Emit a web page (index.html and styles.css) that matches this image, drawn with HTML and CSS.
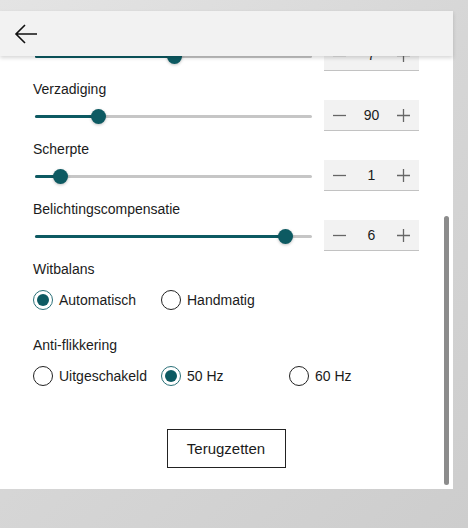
FILE: index.html
```html
<!DOCTYPE html>
<html lang="nl">
<head>
  <meta charset="UTF-8">
  <meta name="viewport" content="width=device-width, initial-scale=1.0">
  <title>Camera-instellingen</title>
  <link rel="stylesheet" href="styles.css">
</head>
<body>

<div class="panel">
  <div class="topbar">
    <button class="back" aria-label="Terug">
      <svg width="24" height="22" viewBox="0 0 24 22">
        <path d="M23 11H2M11 2L2 11l9 9" fill="none" stroke="#111" stroke-width="1.6"/>
      </svg>
    </button>
  </div>

  <div class="main">
  <div class="scroller" id="scroller">
    <div class="content">

      <div class="field">
        <div class="label">Zoom</div>
        <div class="control">
          <div class="slider">
            <div class="track"></div>
            <div class="fill" style="width: 0%"></div>
            <div class="knob" style="left: 0%"></div>
          </div>
          <div class="stepper">
            <span class="step">
              <svg width="13" height="13" viewBox="0 0 13 13"><path d="M0 6.5h13" stroke="#666" stroke-width="1.3"/></svg>
            </span>
            <span class="value">1</span>
            <span class="step">
              <svg width="13" height="13" viewBox="0 0 13 13"><path d="M0 6.5h13M6.5 0v13" stroke="#666" stroke-width="1.3"/></svg>
            </span>
          </div>
        </div>
      </div>

      <div class="field">
        <div class="label">Focus</div>
        <div class="control">
          <div class="slider">
            <div class="track"></div>
            <div class="fill" style="width: 30%"></div>
            <div class="knob" style="left: 30%"></div>
          </div>
          <div class="stepper">
            <span class="step">
              <svg width="13" height="13" viewBox="0 0 13 13"><path d="M0 6.5h13" stroke="#666" stroke-width="1.3"/></svg>
            </span>
            <span class="value">30</span>
            <span class="step">
              <svg width="13" height="13" viewBox="0 0 13 13"><path d="M0 6.5h13M6.5 0v13" stroke="#666" stroke-width="1.3"/></svg>
            </span>
          </div>
        </div>
      </div>

      <div class="field">
        <div class="label">Helderheid</div>
        <div class="control">
          <div class="slider">
            <div class="track"></div>
            <div class="fill" style="width: 50%"></div>
            <div class="knob" style="left: 50%"></div>
          </div>
          <div class="stepper">
            <span class="step">
              <svg width="13" height="13" viewBox="0 0 13 13"><path d="M0 6.5h13" stroke="#666" stroke-width="1.3"/></svg>
            </span>
            <span class="value">0</span>
            <span class="step">
              <svg width="13" height="13" viewBox="0 0 13 13"><path d="M0 6.5h13M6.5 0v13" stroke="#666" stroke-width="1.3"/></svg>
            </span>
          </div>
        </div>
      </div>

      <div class="field">
        <div class="label">Contrast</div>
        <div class="control">
          <div class="slider">
            <div class="track"></div>
            <div class="fill" style="width: 50%"></div>
            <div class="knob" style="left: 50%"></div>
          </div>
          <div class="stepper">
            <span class="step">
              <svg width="13" height="13" viewBox="0 0 13 13"><path d="M0 6.5h13" stroke="#666" stroke-width="1.3"/></svg>
            </span>
            <span class="value">7</span>
            <span class="step">
              <svg width="13" height="13" viewBox="0 0 13 13"><path d="M0 6.5h13M6.5 0v13" stroke="#666" stroke-width="1.3"/></svg>
            </span>
          </div>
        </div>
      </div>

      <div class="field">
        <div class="label">Verzadiging</div>
        <div class="control">
          <div class="slider">
            <div class="track"></div>
            <div class="fill" style="width: 22.7%"></div>
            <div class="knob" style="left: 22.7%"></div>
          </div>
          <div class="stepper">
            <span class="step">
              <svg width="13" height="13" viewBox="0 0 13 13"><path d="M0 6.5h13" stroke="#666" stroke-width="1.3"/></svg>
            </span>
            <span class="value">90</span>
            <span class="step">
              <svg width="13" height="13" viewBox="0 0 13 13"><path d="M0 6.5h13M6.5 0v13" stroke="#666" stroke-width="1.3"/></svg>
            </span>
          </div>
        </div>
      </div>

      <div class="field">
        <div class="label">Scherpte</div>
        <div class="control">
          <div class="slider">
            <div class="track"></div>
            <div class="fill" style="width: 9%"></div>
            <div class="knob" style="left: 9%"></div>
          </div>
          <div class="stepper">
            <span class="step">
              <svg width="13" height="13" viewBox="0 0 13 13"><path d="M0 6.5h13" stroke="#666" stroke-width="1.3"/></svg>
            </span>
            <span class="value">1</span>
            <span class="step">
              <svg width="13" height="13" viewBox="0 0 13 13"><path d="M0 6.5h13M6.5 0v13" stroke="#666" stroke-width="1.3"/></svg>
            </span>
          </div>
        </div>
      </div>

      <div class="field">
        <div class="label">Belichtingscompensatie</div>
        <div class="control">
          <div class="slider">
            <div class="track"></div>
            <div class="fill" style="width: 90.3%"></div>
            <div class="knob" style="left: 90.3%"></div>
          </div>
          <div class="stepper">
            <span class="step">
              <svg width="13" height="13" viewBox="0 0 13 13"><path d="M0 6.5h13" stroke="#666" stroke-width="1.3"/></svg>
            </span>
            <span class="value">6</span>
            <span class="step">
              <svg width="13" height="13" viewBox="0 0 13 13"><path d="M0 6.5h13M6.5 0v13" stroke="#666" stroke-width="1.3"/></svg>
            </span>
          </div>
        </div>
      </div>

      <div class="group">
        <div class="label">Witbalans</div>
        <div class="radios">
          <label class="radio"><span class="dot checked"></span>Automatisch</label>
          <label class="radio"><span class="dot"></span>Handmatig</label>
        </div>
      </div>

      <div class="group">
        <div class="label">Anti-flikkering</div>
        <div class="radios">
          <label class="radio"><span class="dot"></span>Uitgeschakeld</label>
          <label class="radio"><span class="dot checked"></span>50 Hz</label>
          <label class="radio"><span class="dot"></span>60 Hz</label>
        </div>
      </div>

      <div class="actions">
        <button class="reset">Terugzetten</button>
      </div>

    </div>
  </div>
  <div class="scrollbar"><div class="thumb"></div></div>
  </div>
</div>

<script>
  // lijst staat naar beneden gescrold
  var scroller = document.getElementById('scroller');
  scroller.scrollTop = scroller.scrollHeight;
</script>

</body>
</html>
```

FILE: styles.css
```css
body {
  margin: 0;
  height: 528px;
  overflow: hidden;
  font-family: "Liberation Sans", Arial, sans-serif;
  font-size: 14px;
  color: #1b1b1b;
  background: linear-gradient(135deg, #e4e4e4 0%, #d6d6d6 50%, #cdcdcd 100%);
}
.panel {
  margin-top: 11px;
  width: 453px;
  height: 478px;
  background: #fff;
  display: flex;
  flex-direction: column;
}
.topbar {
  height: 45px;
  flex: none;
  background: #f2f2f2;
  box-shadow: 0 2px 4px rgba(0, 0, 0, 0.16);
  position: relative;
  z-index: 1;
  display: flex;
  align-items: center;
  padding-left: 14px;
}
.back {
  border: 0;
  background: none;
  padding: 0;
  display: flex;
}
.main {
  flex: 1;
  min-height: 0;
  display: flex;
}
.scroller {
  flex: 1;
  overflow: hidden;
}
.scrollbar {
  width: 13px;
  flex: none;
}
.thumb {
  margin: 160px 0 0 4px;
  width: 5px;
  height: 269px;
  border-radius: 3px;
  background: #8c8c8c;
}
.content {
  padding: 34px 21px 21px 33px;
}
.label {
  line-height: 20px;
  height: 20px;
}
.field {
  margin-bottom: 8px;
}
.control {
  margin-top: 1px;
  display: flex;
  align-items: center;
  gap: 12px;
}
.slider {
  position: relative;
  margin-left: 2px;
  width: 277px;
  height: 16px;
}
.track,
.fill {
  position: absolute;
  left: 0;
  top: 7px;
  height: 3px;
  border-radius: 2px;
}
.track {
  width: 100%;
  background: #c6c6c6;
}
.fill {
  background: #0d5a62;
}
.knob {
  position: absolute;
  top: 1px;
  width: 15px;
  height: 15px;
  margin-left: -7px;
  border-radius: 50%;
  background: #0d5a62;
  box-shadow: 0 1px 3px rgba(0, 0, 0, 0.25);
}
.stepper {
  width: 95px;
  height: 31px;
  box-sizing: border-box;
  background: #f2f2f2;
  border-bottom: 1px solid #c2c2c2;
  display: flex;
  align-items: center;
  padding: 0 9px;
}
.step {
  display: flex;
}
.value {
  flex: 1;
  text-align: center;
  font-size: 14px;
}
.group {
  margin-bottom: 23px;
}
.radios {
  margin-top: 9px;
  display: grid;
  grid-template-columns: 128px 128px 128px;
}
.radio {
  height: 24px;
  display: flex;
  align-items: center;
  gap: 6px;
}
.dot {
  width: 20px;
  height: 20px;
  box-sizing: border-box;
  border: 1.3px solid #222;
  border-radius: 50%;
  display: flex;
  align-items: center;
  justify-content: center;
}
.dot.checked {
  border: 1.5px solid #2a7078;
}
.dot.checked::after {
  content: "";
  width: 12px;
  height: 12px;
  border-radius: 50%;
  background: #0d5a62;
}
.actions {
  margin-top: 41px;
  display: flex;
  justify-content: center;
}
.reset {
  width: 119px;
  height: 39px;
  border: 1px solid #222;
  background: #fff;
  font-family: "Liberation Sans", Arial, sans-serif;
  font-size: 15px;
  color: #1b1b1b;
}
```
